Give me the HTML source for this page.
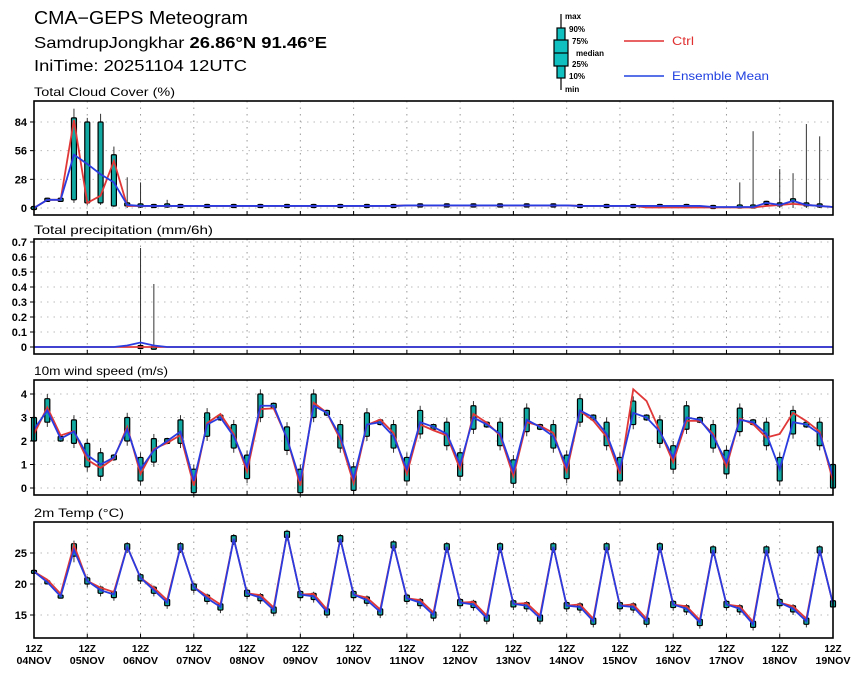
<!DOCTYPE html><html><head><meta charset="utf-8"><style>
body{margin:0;background:#fff;width:860px;height:676px;overflow:hidden}
svg{display:block;font-family:"Liberation Sans",sans-serif}
</style></head><body>
<svg id="s" width="860" height="676" xmlns="http://www.w3.org/2000/svg">
<text x="34" y="24" font-size="18" textLength="214" lengthAdjust="spacingAndGlyphs">CMA−GEPS Meteogram</text>
<text x="34" y="48" font-size="16" textLength="293" lengthAdjust="spacingAndGlyphs">SamdrupJongkhar <tspan font-weight="bold">26.86°N 91.46°E</tspan></text>
<text x="34" y="71" font-size="16" textLength="213" lengthAdjust="spacingAndGlyphs">IniTime: 20251104 12UTC</text>
<g stroke="#000" stroke-width="1.2">
<line x1="561" y1="14" x2="561" y2="90"/>
<rect x="557" y="28" width="8" height="50" fill="#10c0c0"/>
<rect x="554" y="40" width="14" height="26" fill="#10c0c0"/>
<line x1="554" y1="53" x2="568" y2="53"/>
</g>
<g font-size="8" font-weight="bold">
<text x="565" y="19">max</text><text x="569" y="32">90%</text><text x="572" y="44">75%</text>
<text x="576" y="56">median</text><text x="572" y="67">25%</text><text x="569" y="79">10%</text><text x="565" y="92">min</text>
</g>
<line x1="624" y1="41" x2="664" y2="41" stroke="#e03030" stroke-width="1.5"/>
<text x="672" y="45" font-size="12" fill="#e03030" textLength="22" lengthAdjust="spacingAndGlyphs">Ctrl</text>
<line x1="624" y1="76" x2="664" y2="76" stroke="#2040e0" stroke-width="1.5"/>
<text x="672" y="80" font-size="12" fill="#2040e0" textLength="97" lengthAdjust="spacingAndGlyphs">Ensemble Mean</text>
<g id="g"></g>
</svg>
<script>
const NS="http://www.w3.org/2000/svg",G=document.getElementById('g');
function el(t,a,txt){const e=document.createElementNS(NS,t);for(const k in a)e.setAttribute(k,a[k]);if(txt!=null)e.textContent=txt;G.appendChild(e);return e;}
const X0=34,X1=833,dx=(X1-X0)/60;
const X=i=>X0+i*dx;
function panel(top,bot,title,tl,ticks,y,mean,ctrl,spread,extra){
  el('text',{x:34,y:top-5,'font-size':12,textLength:tl,lengthAdjust:'spacingAndGlyphs'},title);
  for(let d=1;d<15;d++)el('line',{x1:X(d*4),x2:X(d*4),y1:top,y2:bot,stroke:'#999','stroke-dasharray':'1.5 5'});
  ticks.forEach(t=>{const yy=y(t);el('line',{x1:X0,x2:X1,y1:yy,y2:yy,stroke:'#bbb','stroke-dasharray':'1.5 5'});
    el('line',{x1:X0-4,x2:X0,y1:yy,y2:yy,stroke:'#000'});
    el('text',{x:X0-7,y:yy+4,'font-size':11,'font-weight':'bold','text-anchor':'end'},t);});
  for(let d=0;d<=15;d++)el('line',{x1:X(d*4),x2:X(d*4),y1:bot,y2:bot-4,stroke:'#000'});
  if(extra)extra();
  mean.forEach((m,i)=>{const s=spread(i,m,ctrl[i]);if(!s)return;
    el('line',{x1:X(i),x2:X(i),y1:y(s[0]),y2:y(s[1]),stroke:'#333','stroke-width':1});
    const a=y(s[2]),b=y(s[3]);
    el('rect',{x:X(i)-2.5,y:Math.min(a,b),width:5,height:Math.max(Math.abs(b-a),3),fill:'#10a8a0',stroke:'#000','stroke-width':1.2,rx:1});});
  const pl=(arr,c)=>el('polyline',{points:arr.map((v,i)=>X(i)+','+y(v)).join(' '),fill:'none',stroke:c,'stroke-width':1.8});
  pl(ctrl,'#e03838');pl(mean,'#2a3ce0');
  el('rect',{x:X0,y:top,width:X1-X0,height:bot-top,fill:'none',stroke:'#000','stroke-width':1.6});
}
let cm=[0,8,8,52,43,33,25,3],cc=[0,8,8,86,5,12,46,2];
for(let i=8;i<61;i++){let v=2;if(i>=28&&i<=40)v=2.5;if(i>50)v=1+Math.max(0,3-Math.abs(i-57));cm.push(v);cc.push(i>45&&i<55?0.5:v);}
cm[55]=5;cm[57]=7;cm[56]=3;
const yc=v=>208-v*1.024;
panel(101,215,'Total Cloud Cover (%)',141,[0,28,56,84],yc,cm,cc,(i,m,c)=>{
  const big={3:[5,97,8,88],4:[3,88,5,84],5:[3,92,5,84],6:[1,60,2,52]};
  if(big[i])return big[i];
  const w={7:30,8:25,10:8,53:25,54:75,56:38,57:34,58:82,59:70};
  if(w[i])return [0,w[i],m-1,m+2];
  if(i%2==1||i<3)return [m-2,m+2,m-1.5,m+1.5];return null;});
const pm=Array(61).fill(0);pm[8]=0.03;pm[7]=0.01;pm[9]=0.01;
const yp=v=>347-v*150;
panel(239,354,'Total precipitation (mm/6h)',179,[0,0.1,0.2,0.3,0.4,0.5,0.6,0.7],yp,pm,Array(61).fill(0),(i)=>{
  if(i==8)return[0,0.66,0,0.01];if(i==9)return[0,0.42,0,0.005];return null;});
const wm=[2.5,3.3,2.1,2.4,1.4,1.0,1.3,2.5,0.8,1.6,2.0,2.4,0.3,2.7,3.0,2.2,0.9,3.5,3.5,2.1,0.3,3.5,3.2,2.2,0.4,2.7,2.8,2.2,0.8,2.8,2.6,2.3,1.0,3.0,2.7,2.3,0.7,2.9,2.6,2.2,0.9,3.3,3.0,2.3,0.8,3.2,3.0,2.4,1.3,3.0,2.9,2.2,1.1,2.9,2.8,2.3,0.8,2.8,2.7,2.3,0.5];
const wc=wm.map((v,i)=>v+(i%4==0?-0.2:0.15*Math.sin(i)));wc[45]=4.2;wc[46]=3.7;wc[56]=2.3;wc[57]=3.2;
const yw=v=>488-v*23.5;
panel(380,495,'10m wind speed (m/s)',134,[0,1,2,3,4],yw,wm,wc,(i,m)=>{const s=(i%4==2)?0.1:0.5;return[m-s*1.4,m+s*1.4,m-s,m+s];});
const pk=[26,26,26,27.3,28,27.3,26.3,26,26,26,26,26,25.5,25.5,25.5],
a12=[20.5,21,19.5,18.5,18.3,18.3,17.7,17,16.8,16.5,16.5,16.7,16.7,17,16.5],
a18=[19,19,17.7,17.8,18,17.4,17,16.7,16.5,16.3,16.3,16,16,16,15.7],
a00=[18.3,17,16.3,15.8,15.5,15.5,15,14.5,14.5,14,14,13.8,13.5,14,13.5];
let tm=[22,20.3,18,25.5];
for(let d=0;d<14;d++)tm.push(a12[d],a18[d],a00[d],pk[d+1]);
tm.push(16.8);
const tc=tm.map((v,i)=>v+(i%4==1||i%4==2?0.4:0));tc[3]=26.3;
const yt=v=>584-(v-20)*6.2;
panel(522,638,'2m Temp (°C)',90,[15,20,25],yt,tm,tc,(i,m)=>{if(i<3)return[m-0.2,m+0.2,m-0.2,m+0.2];const s=i==3?1:0.5;return[m-s*2,m+s*1.5,m-s,m+s];});
for(let d=0;d<=15;d++){const x=X(d*4);
 el('text',{x:x,y:652,'font-size':10,'font-weight':'bold','text-anchor':'middle'},'12Z');
 el('text',{x:x,y:664,'font-size':10,'font-weight':'bold','text-anchor':'middle',textLength:35,lengthAdjust:'spacingAndGlyphs'},String(d+4).padStart(2,'0')+'NOV');}
</script>
</body></html>
